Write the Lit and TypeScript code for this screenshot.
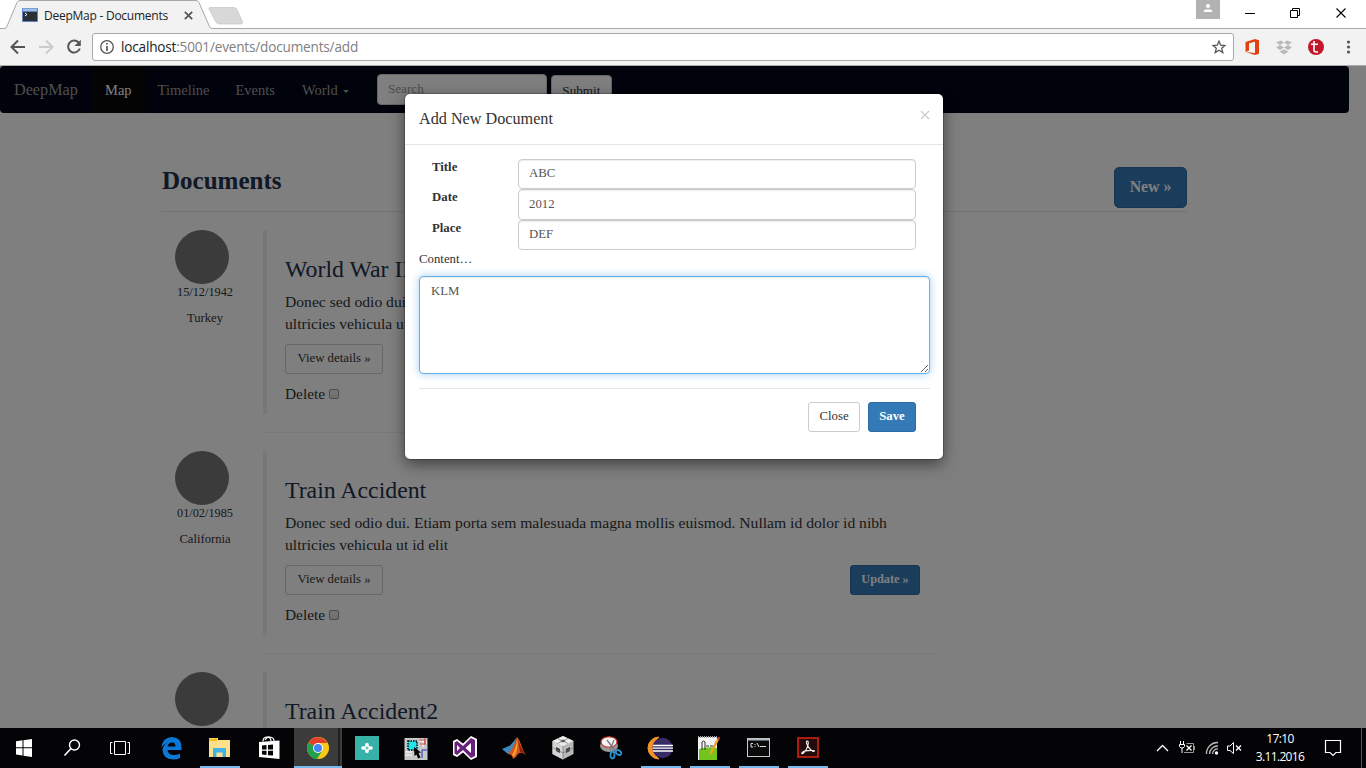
import { LitElement, html, css, svg } from "lit";
import { customElement } from "lit/decorators.js";
import { classMap } from "lit/directives/class-map.js";

const LOREM =
  "Donec sed odio dui. Etiam porta sem malesuada magna mollis euismod. Nullam id dolor id nibh ultricies vehicula ut id elit";

const DOCS = [
  { title: "World War II", date: "15/12/1942", place: "Turkey" },
  { title: "Train Accident", date: "01/02/1985", place: "California" },
  { title: "Train Accident2", date: "", place: "" },
];

@customElement("browser-chrome")
class BrowserChrome extends LitElement {
  static styles = css`
    :host { display: block; height: 66px; font-family: "Open Sans", sans-serif; background: #fff; }
    svg { display: block; flex: none; }
    .tabs { display: flex; height: 29px; position: relative; box-sizing: border-box; }
    .strip { position: absolute; left: 0; top: 0; }
    .tab { position: relative; display: flex; align-items: center; padding: 2px 0 0 22px; width: 176px; box-sizing: border-box; height: 29px; }
    .tab .name { margin-left: 6px; width: 140px; font-size: 12px; line-height: 16px; color: #222; white-space: nowrap; letter-spacing: -0.25px; flex: none; }
    .controls { position: relative; margin-left: auto; }
    .bar { display: flex; align-items: center; height: 37px; box-sizing: border-box; background: #f2f2f2; border-bottom: 1px solid #a9a9a9; }
    .url { display: flex; align-items: center; box-sizing: border-box; width: 1142px; height: 28px; border: 1px solid #a9a9a9; border-radius: 3px; background: #fff; padding: 0 7px 0 6px; }
    .addr { margin-left: 6px; font-size: 13.600px; line-height: 20px; color: #808080; flex: 1; white-space: nowrap; letter-spacing: -0.190px; }
    .addr b { font-weight: 400; color: #222; }
  `;
  render() {
    return html`
      <div class="tabs">
        <svg class="strip" width="1366" height="29">
          <path d="M0 28.5H1366" stroke="#a9a9a9" />
          <path d="M5 29L6.500 27L17 2.500Q18 0.500 20 0.500H196Q198 0.500 199 2.500L210 27L212 29Z" fill="#f2f2f2" />
          <path d="M0 28.500H4Q6 28.500 6.700 27L17 2.500Q18 0.500 20 0.500H196Q198 0.500 199 2.500L209.700 27Q210.500 28.500 212 28.500" fill="none" stroke="#a9a9a9" />
          <path d="M210 7.500H234Q236 7.500 237 9.500L242.500 22Q243 24 241 24H219Q217 24 216 22L209 9Q208.500 7.500 210 7.500Z" fill="#d8d8d8" stroke="#c4c4c4" stroke-width=".7" />
        </svg>
        <div class="tab">
          <svg width="16" height="15">
            <rect width="16" height="14" rx="1" fill="#5d82bd" />
            <rect x="1" y="0.500" width="14" height="2.500" fill="#9dbde8" />
            <rect x="1" y="4" width="14" height="9" fill="#2b2f36" />
            <path d="M3 5l2 1.500L3 8" fill="none" stroke="#fff" />
          </svg>
          <span class="name">DeepMap - Documents</span>
          <svg width="9" height="9"><path d="M.8 .8L8.200 8.200M8.200 .8L.8 8.200" stroke="#555" stroke-width="1.700" /></svg>
        </div>
        <svg class="controls" width="170" height="28">
          <rect width="24" height="19" fill="#b2b2b2" />
          <circle cx="12" cy="6" r="2.100" fill="#fff" />
          <path d="M7.800 12V11Q8 9.300 12 9.200Q16 9.300 16.200 11V12Z" fill="#fff" />
          <path d="M49 13.500H59" stroke="#000" />
          <path d="M94.500 10.500H101.500V17.500H94.500ZM96.500 10V8.500H103.500V15.500H102" fill="none" stroke="#000" />
          <path d="M140.500 8.500L149.500 17.500M149.500 8.500L140.500 17.500" stroke="#000" stroke-width="1.100" />
        </svg>
      </div>
      <div class="bar">
        <svg width="92" height="36" fill="none">
          <path d="M25 18H12M18 11.500L11.500 18L18 24.500" stroke="#555" stroke-width="2" />
          <path d="M39 18H52M46 11.500L52.500 18L46 24.500" stroke="#ccc" stroke-width="2" />
          <path d="M78.600 13.500A6 6 0 1 0 79.800 19.500" stroke="#555" stroke-width="2" />
          <path d="M80.800 10.700V17H74.500Z" fill="#555" />
        </svg>
        <div class="url">
          <svg width="16" height="16" fill="none">
            <circle cx="8" cy="8" r="6.300" stroke="#555" stroke-width="1.300" />
            <path d="M8 7V12M8 4V5.600" stroke="#555" stroke-width="1.700" />
          </svg>
          <div class="addr"><b>localhost</b>:5001/events/documents/add</div>
          <svg width="14" height="14">
            <path d="M7 1.200L8.700 5.200L13 5.500L9.700 8.300L10.800 12.600L7 10.300L3.200 12.600L4.300 8.300L1 5.500L5.300 5.200Z" fill="none" stroke="#555" stroke-width="1.300" />
          </svg>
        </div>
        <svg width="132" height="36">
          <path d="M11.500 13L21 10L25 11.300V24.700L21 26L11.500 23L21 24V12.800L15 14.300V21.500L11.500 23Z" fill="#e2410f" />
          <path d="M47 11.500L50 13.500L46 16L42 13.500ZM53 11.500L58 13.500L54 16L50 13.500ZM46 16L50 18.500L46 21L42 18.500ZM54 16L58 18.500L54 21L50 18.500ZM50 20.300L54.500 22.500L50 25.500L45.500 22.500Z" fill="#b9b9b9" />
          <circle cx="82" cy="18" r="8" fill="#c3172c" />
          <path d="M80 12V21Q80 23 82 23H84M77 15.200H84" fill="none" stroke="#fff" stroke-width="1.600" />
          <g fill="#555"><circle cx="114.500" cy="13" r="1.600" /><circle cx="114.500" cy="18" r="1.600" /><circle cx="114.500" cy="23" r="1.600" /></g>
        </svg>
      </div>`;
  }
}

@customElement("site-page")
class SitePage extends LitElement {
  static styles = css`
    :host { display: block; font-family: "Liberation Serif", serif; color: #333; background: #fff; }
    .nav { display: flex; align-items: flex-start; width: 1349px; height: 47px; border-radius: 4px; background: #020718; color: #9d9d9d; font-size: 14.500px; line-height: 46px; }
    .nav .brand { width: 78px; padding-left: 14px; font-size: 16.200px; line-height: 48px; height: 47px; }
    .nav .item { padding: 1px 13px 0; white-space: nowrap; }
    .nav .active { background: #080808; color: #fff; }
    .nav .world { width: 48px; padding: 1px 14px 0 14px; }
    .caret { display: inline-block; border: 3px solid transparent; border-top: 3px solid; border-bottom: 0; vertical-align: 2px; margin-left: 5px; }
    .search, .submit { box-sizing: border-box; border: 1px solid #ccc; border-radius: 4px; background: #fff; height: 31px; font-size: 13.200px; line-height: 29px; }
    .search { margin-top: 8px; margin-left: 13px; width: 170px; padding-left: 10px; color: #999; line-height: 28px; }
    .submit { margin-top: 9px; margin-left: 4px; width: 61px; text-align: center; color: #333; }
    .docs { width: 1026px; margin: 54px 0 0 161px; }
    .head { display: flex; justify-content: space-between; align-items: flex-start; height: 44px; border-bottom: 1px solid #e7e7e7; }
    .head h1 { margin: 0 0 0 1px; font-size: 25px; line-height: 28px; color: #22304c; }
    .btn { box-sizing: border-box; display: inline-block; height: 30px; border: 1px solid #ccc; border-radius: 3px; font-size: 12.800px; line-height: 26px; padding: 0 11px; text-align: center; white-space: nowrap; }
    .blue { background: #337ab7; border-color: #2e6da4; color: #fff; font-weight: 700; }
    .new { width: 73px; height: 41px; font-size: 15.800px; line-height: 38px; border-radius: 5px; padding: 0; }
    .doc { display: flex; height: 203px; margin-top: 18px; }
    .meta { width: 88px; margin-right: 14px; text-align: center; font-size: 12.300px; line-height: 16px; }
    .dot { width: 54px; height: 54px; margin-left: 14px; border-radius: 50%; background: #777; }
    .meta .place { margin-top: 10px; font-size: 12.600px; }
    .main { width: 674px; border-bottom: 1px solid #eee; height: 202px; }
    .body { box-sizing: border-box; height: 184px; border-left: 4px solid #eee; padding: 26px 17px 0 18px; }
    h2 { margin: 0; font-weight: 400; font-size: 23.800px; line-height: 26px; color: #22304c; }
    p { margin: 9px 0; font-size: 15.630px; line-height: 22px; width: 625px; }
    .row { display: flex; justify-content: space-between; }
    .update { width: 70px; padding: 0; font-size: 12.300px; }
    .view { width: 98px; }
    .del { display: flex; align-items: center; margin-top: 10px; font-size: 15.400px; line-height: 20px; }
    .box { box-sizing: border-box; width: 10px; height: 10px; margin-left: 4px; border: 1px solid #999; border-radius: 2px; background: linear-gradient(#eee, #ddd); }
  `;
  render() {
    return html`
      <div class="nav">
        <span class="brand">DeepMap</span>
        <span class="item active">Map</span>
        <span class="item">Timeline</span>
        <span class="item">Events</span>
        <span class="item world">World<i class="caret"></i></span>
        <div class="search">Search</div>
        <div class="submit">Submit</div>
      </div>
      <div class="docs">
        <div class="head"><h1>Documents</h1><span class="btn blue new">New »</span></div>
        ${DOCS.map(
          (d) => html`<div class="doc">
            <div class="meta"><div class="dot"></div>${d.date ? html`<div>${d.date}</div><div class="place">${d.place}</div>` : ""}</div>
            <div class="main">
              <div class="body">
                <h2>${d.title}</h2>
                ${d.date
                  ? html`<p>${LOREM}</p>
                      <div class="row"><span class="btn view">View details »</span><span class="btn blue update">Update »</span></div>
                      <div class="del">Delete<span class="box"></span></div>`
                  : ""}
              </div>
            </div>
          </div>`
        )}
      </div>`;
  }
}

@customElement("document-dialog")
class DocumentDialog extends LitElement {
  static styles = css`
    :host { display: block; box-sizing: border-box; width: 538px; height: 365px; background: #fff; border-radius: 5px; box-shadow: 0 0 0 1px rgba(0,0,0,.2), 0 5px 15px rgba(0,0,0,.5); font-family: "Liberation Serif", serif; color: #333; }
    .header { display: flex; justify-content: space-between; box-sizing: border-box; height: 51px; padding: 14px 13px 0 14px; border-bottom: 1px solid #e5e5e5; font-size: 16.200px; line-height: 22px; }
    .content { padding: 14px 13px 0 14px; font-size: 12.800px; }
    .field { display: flex; padding: 0 14px 0 13px; }
    label { width: 86px; font-weight: 700; line-height: 17px; }
    input, textarea { box-sizing: border-box; display: block; margin: 0; border: 1px solid #ccc; border-radius: 4px; font: 12.800px "Liberation Serif", serif; color: #555; background: #fff; box-shadow: inset 0 1px 1px rgba(0,0,0,.075); outline: none; }
    input { width: 398px; height: 30px; padding: 0 10px 2px; }
    .tall input { height: 31px; padding-bottom: 1px; }
    .hint { line-height: 19px; }
    textarea { width: 511px; height: 98px; margin-top: 7px; padding: 6px 11px; line-height: 17px; border-color: #66afe9; box-shadow: inset 0 1px 1px rgba(0,0,0,.075), 0 0 8px rgba(102,175,233,.6); }
    .footer { display: flex; justify-content: flex-end; gap: 8px; margin-top: 14px; padding: 13px 14px 0 0; border-top: 1px solid #e5e5e5; }
    .btn { box-sizing: border-box; height: 30px; border: 1px solid #ccc; border-radius: 3px; line-height: 26px; text-align: center; width: 52px; }
    .save { width: 48px; background: #337ab7; border-color: #2e6da4; color: #fff; font-weight: 700; }
  `;
  render() {
    const fields = [["Title", "ABC"], ["Date", "2012"], ["Place", "DEF"]];
    return html`
      <div class="header">
        <span>Add New Document</span>
        <svg width="10" height="14"><path d="M1 3L9 11M9 3L1 11" stroke="#ccc" stroke-width="1.200" /></svg>
      </div>
      <div class="content">
        ${fields.map(([k, v], i) => html`<div class=${classMap({ field: true, tall: i === 1 })}><label>${k}</label><input .value=${v} /></div>`)}
        <div class="hint">Content…</div>
        <textarea spellcheck="false" .value=${"KLM"}></textarea>
        <div class="footer"><span class="btn">Close</span><span class="btn save">Save</span></div>
      </div>`;
  }
}

/* Every application icon is drawn inside its own 49x40 taskbar cell. */
const APPS = [
  { on: false, icon: svg`<path d="M14 20Q16 9 25 9Q35 9.500 34.500 20V22H20.500Q21 27 27 27Q30.500 27 33 25.500V30Q30 31.500 26 31.500Q16 31 15.500 22Q15.500 16.500 21.500 14.500Q16.500 15.500 14 20ZM20.500 18.500H28.500Q28.500 14.500 25 14.500Q21.500 14.500 20.500 18.500Z" fill="#0a78d7"/>` },
  { on: true, icon: svg`<path d="M13 10H22V12H34V29H13Z" fill="#ffe08a"/><path d="M13 10.500H21V13H13Z" fill="#f5bd1d"/><path d="M17 20H30V29H26.500V24.500H20.500V29H17Z" fill="#3cb4ea"/>` },
  { on: false, icon: svg`<path d="M14 14L34.500 12.500V31L14 29Z" fill="#fff"/><path d="M18 13.500Q18 9 22 9T26 13.500M20 12Q22 8.500 25 9Q29 9.500 29 13" fill="none" stroke="#fff" stroke-width="1.200"/><path d="M17 17.500L21.500 17V21.500H17ZM23 17L28 16.500V21.500H23ZM17 22.800H21.500V27L17 26.500ZM23 22.800H28V27.500L23 27.200Z" fill="#050505"/>` },
  { on: true, active: true, icon: svg`<circle cx="24" cy="20" r="11" fill="#fbc716"/><path d="M24 20L14.500 14.500A11 11 0 0 0 23 31L28.300 22.500Z" fill="#22a04b"/><path d="M24 20L14.500 14.500A11 11 0 0 1 33.500 15H24Z" fill="#e33e2b"/><circle cx="24" cy="20" r="5" fill="#fff"/><circle cx="24" cy="20" r="4" fill="#4184f3"/>` },
  { on: false, icon: svg`<rect x="12" y="8" width="24" height="24" fill="#36b3a6"/><path d="M24 16.500V23.500M20 20H28" stroke="#fff" stroke-width="3.600" stroke-linecap="round"/><path d="M22.500 20H25.500M24 18.500V21.500" stroke="#36b3a6"/>` },
  { on: false, icon: svg`<rect x="12.500" y="10" width="23" height="22" fill="#c8c8c8"/><path d="M13 24H20M13 27H20M27 13H34V16H29M31 11V19" stroke="#fff" fill="none"/><path d="M27 12H33V16H28M33 10V17" stroke="#c44" fill="none"/><path d="M30 30V22H35" stroke="#23c" fill="none"/><rect x="16" y="13" width="9" height="9" fill="#25e4e8" stroke="#000" stroke-width="1.500" stroke-dasharray="1.500 1"/><path d="M22 19L29 24.500L26.500 25L28.500 29.500L26 30.500L24.500 26.500L22.500 28Z" fill="#000"/>` },
  { on: false, icon: svg`<path d="M30 8L36 11V29L30 32L22 24.500L16 29L12 27V13L16 11L22 15.500Z" fill="#fff"/><path d="M30 10L34 12V28L30 30L22 22L16 27L13.500 25.500V14.500L16 13L22 18Z" fill="#68217a"/><path d="M16 17V23L19 20ZM30 15V25L24.500 20Z" fill="#fff"/>` },
  { on: false, icon: svg`<path d="M12 21L20 17.500L24 13L27 9L22 25L18 26Z" fill="#3f88b8"/><path d="M27 9C31 13 32 22 36 27Q31 23 28 26Q26 30 23 31Q22 26 18 26Q24 20 27 9Z" fill="#d7541d"/><path d="M27 11Q26 21 22 27L24 29Q29 20 27 11Z" fill="#f5a32c"/><path d="M28 12Q32 23 36 27Q32 24 30 24Z" fill="#8c1f12"/>` },
  { on: false, icon: svg`<path d="M24 8L34.500 13V26L24 31.500L13.500 26V13Z" fill="#b9b9b9"/><path d="M24 8L34.500 13L24 18L13.500 13Z" fill="#eee"/><path d="M24 18V31.500L13.500 26V13Z" fill="#d4d4d4"/><path d="M21 13L24 11.500L27 13L24 14.500ZM17 19L21 21V25L17 23ZM27 21L31 19V23L27 25Z" fill="#3c3c3c"/><path d="M24 18V31.500M13.500 19.500L24 25L34.500 19.500M18.500 10.500L29 15.500M29 10.500L18.500 15.500" stroke="#777" fill="none" stroke-width=".7"/>` },
  { on: false, icon: svg`<ellipse cx="21" cy="18" rx="9" ry="6" fill="#999"/><ellipse cx="21" cy="14" rx="8" ry="5.200" fill="#f6f6f6" stroke="#d13b36" stroke-width="1.300"/><path d="M19 12L28 24M26 12L22 22" stroke="#777" stroke-width="1.300"/><ellipse cx="24.500" cy="27" rx="2" ry="3.500" fill="none" stroke="#2b91cf" stroke-width="1.800"/><ellipse cx="30.500" cy="24.500" rx="3" ry="2" fill="none" stroke="#2b91cf" stroke-width="1.800" transform="rotate(35 30.500 24.500)"/>` },
  { on: true, icon: svg`<path d="M22 9A11 11 0 0 0 22 31A14 14 0 0 1 22 9Z" fill="#f3922b" stroke="#f3922b"/><circle cx="25.500" cy="20" r="10.200" fill="#372c63"/><path d="M16 17.500H36M15.500 20.200H36M16 23H36" stroke="#fff" stroke-width="1.300"/>` },
  { on: true, icon: svg`<path d="M12 9H31V32H12Z" fill="#f4f4f4"/><path d="M13 21Q22 18 31 20V32H13Z" fill="#74c51b"/><path d="M12 9H31" stroke="#aaa" stroke-width="2" stroke-dasharray="1 1"/><path d="M16 22V14Q18 12 19 14V22M20 18H23M24 18H27" fill="none" stroke="#333"/><path d="M32 9L24 24L23.500 27L26 25.500L34 10Z" fill="#eaa326"/><path d="M32 9L34 10L33 12L31 11Z" fill="#b43230"/>` },
  { on: true, icon: svg`<rect x="12.500" y="10.500" width="22" height="18" fill="#0a0a0a" stroke="#c9c9c9"/><path d="M13 11.500H34" stroke="#b5bcc5" stroke-width="2"/><path d="M18 15.500H16V19H18M20 16V17M20 18V19M22 15L24 19M25 18.500H31" stroke="#ddd" fill="none"/>` },
  { on: true, icon: svg`<rect x="14" y="10" width="20" height="19" fill="#220b0a" stroke="#e02214" stroke-width="1.500"/><path d="M23 13Q25 13 24 17Q23 22 19 25.500Q17 26 18 24.500Q21 22 30 22.500Q31 23.500 29 23.500Q24 20 22.500 15Q22.300 13 23 13Z" fill="none" stroke="#eee" stroke-width="1.100"/>` },
];

@customElement("task-bar")
class TaskBar extends LitElement {
  static styles = css`
    :host { display: flex; height: 40px; background: #040406; color: #fff; font-family: "Open Sans", sans-serif; }
    svg { display: block; flex: none; }
    .cell { box-sizing: border-box; width: 49px; height: 40px; display: flex; flex-direction: column; position: relative; }
    .active { background: linear-gradient(90deg, #3b3b3b 44px, #202020 44px, #202020 46px, #3b3b3b 46px, #3b3b3b 48px, #040406 48px); }
    .line { position: absolute; bottom: 0; left: 4px; width: 40px; height: 2px; background: #76b9ed; }
    .active .line { left: 0; width: 48px; }
    .clock { width: 60px; text-align: center; font-size: 12px; line-height: 18px; padding-top: 2px; letter-spacing: -0.650px; white-space: nowrap; }
    .tray { display: flex; margin-left: auto; }
  `;
  render() {
    return html`
      <svg width="147" height="40" fill="none" stroke="#fff">
        <path d="M16 13.200L22.500 12.300V19.300H16ZM23.500 12.200L32 11V19.300H23.500ZM16 20.300H22.500V27.500L16 26.500ZM23.500 20.300H32V29L23.500 27.700Z" fill="#fff" stroke="none" />
        <circle cx="74.500" cy="17" r="5" stroke-width="1.400" /><path d="M71 20.500L64.500 27.500" stroke-width="1.600" />
        <path d="M114.500 13.500H125.500V26.500H114.500ZM112.500 14.500H110.500V25.500H112.500M127.500 14.500H129.500V25.500H127.500" />
      </svg>
      ${APPS.map(
        (a: any) => html`<div class=${classMap({ cell: true, active: !!a.active })}>
          <svg width="49" height="40">${a.icon}</svg>${a.on ? html`<i class="line"></i>` : ""}
        </div>`
      )}
      <div class="tray">
        <svg width="100" height="40" fill="none" stroke="#fff">
          <path d="M7 23L12.500 17.500L18 23" stroke-width="1.300" />
          <path d="M36.500 15.500H43.500V24.500H34" stroke="#999" /><path d="M44.500 18V22" stroke="#999" />
          <path d="M30.500 13V16M33.500 13V16M29.500 16.500H34.500V18.500L33 20H31L29.500 18.500ZM32 20V25" />
          <path d="M36.500 17.500L41.500 22.500M41.500 17.500L36.500 22.500" stroke-width="1.300" />
          <path d="M56.500 26A11 11 0 0 1 68 14.500M59.500 26A8 8 0 0 1 68 18M62.500 26A5 5 0 0 1 68 21" stroke="#bbb" stroke-width="1.300" /><circle cx="66.500" cy="25" r="1.700" fill="#fff" stroke="none" />
          <path d="M77.500 18H80L83.500 14.500V25.500L80 22.500H77.500Z" /><path d="M86 17.500L91 22.500M91 17.500L86 22.500" stroke-width="1.300" />
        </svg>
        <div class="clock"><div>17:10</div><div>3.11.2016</div></div>
        <svg width="56" height="40" fill="none" stroke="#fff">
          <path d="M15.500 12.500H30.500V24.500H26L23 27.500L20 24.500H15.500Z" stroke-width="1.200" /><path d="M51.500 0V40" stroke="#555" />
        </svg>
      </div>`;
  }
}

@customElement("app-root")
class AppRoot extends LitElement {
  static styles = css`
    :host { display: flex; flex-direction: column; width: 1366px; height: 768px; overflow: hidden; }
    .view { position: relative; height: 662px; overflow: hidden; background: #fff; }
    .shade { position: absolute; inset: 0; background: rgba(0, 0, 0, 0.5); }
    .dialog { position: absolute; left: 405px; top: 28px; }
  `;
  render() {
    return html`
      <browser-chrome></browser-chrome>
      <div class="view">
        <site-page></site-page>
        <div class="shade"></div>
        <document-dialog class="dialog"></document-dialog>
      </div>
      <task-bar></task-bar>`;
  }
}
